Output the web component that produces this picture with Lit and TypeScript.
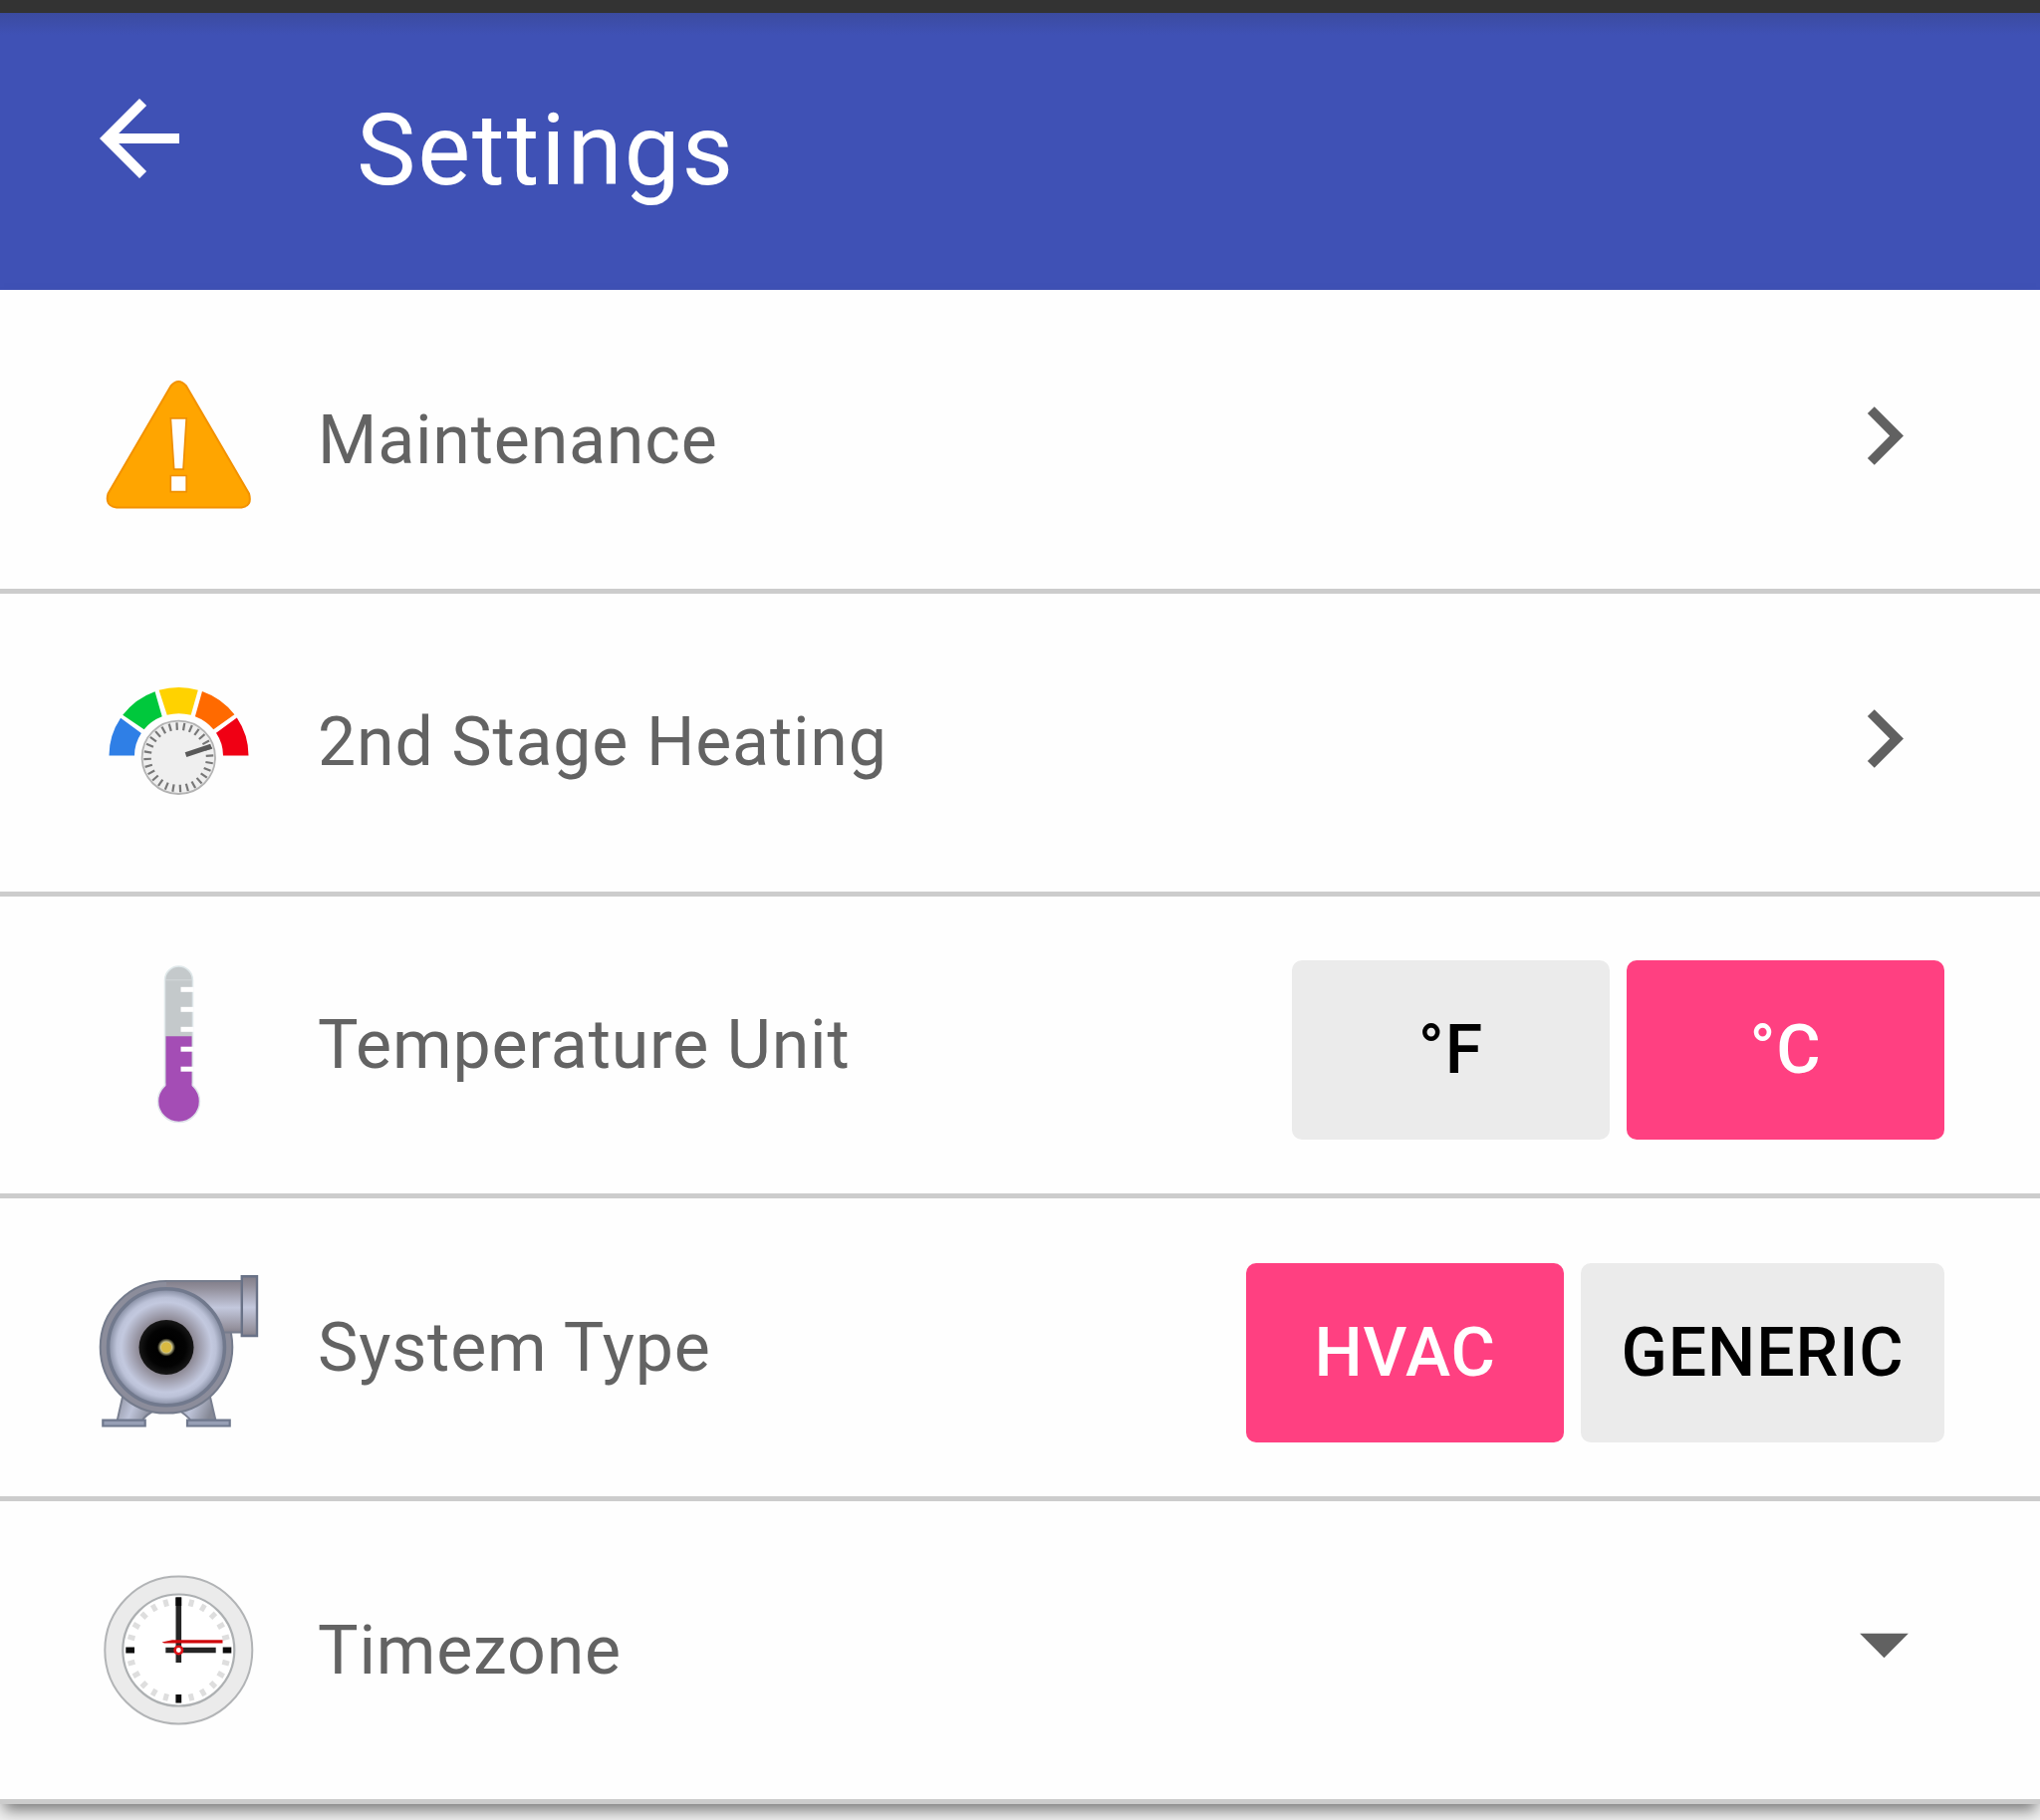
import { LitElement, html, svg, css } from "lit";
import { customElement, property, state } from "lit/decorators.js";
import { styleMap } from "lit/directives/style-map.js";

const rad = (deg: number) => (deg * Math.PI) / 180;
const polar = (cx: number, cy: number, r: number, deg: number, ry = r) =>
  `${(cx + r * Math.cos(rad(deg))).toFixed(2)} ${(cy - ry * Math.sin(rad(deg))).toFixed(2)}`;

// One coloured band of the gauge; the outer and inner edges have their own start and end angles.
const band = (o1: number, o2: number, i1: number, i2: number, fill: string) => {
  const outer = (a: number) => polar(89.5, 88.5, 70, a, 68.5);
  const inner = (a: number) => polar(89.5, 88.5, 44.5, a, 42.3);
  return svg`<path fill=${fill} d=${`M${outer(o1)}A70 68.5 0 0 1 ${outer(o2)}L${inner(i2)}A44.5 42.3 0 0 0 ${inner(i1)}Z`}/>`;
};

const warning = svg`
  <path fill="#ffa500" stroke="#f39200" stroke-width="2" stroke-linejoin="round"
    d="M81.500 27.500Q89.200 18.500 97 27.500L160 135.500Q163.500 148 152.500 149.500H27Q15 148 18.500 135.500Z"/>
  <path fill="#fff" stroke="#ef8f00" stroke-width="1.700" d="M81.300 59.800H97.200L94 111.200H84.700ZM81.300 117.500H97.200V133.700H81.300Z"/>`;

const gauge = svg`
  ${band(180, 146.5, 180, 147.8, "#2f7fe6")}
  ${band(143.5, 110, 141.5, 112.2, "#00c83c")}
  ${band(106.5, 74, 105.4, 74.1, "#ffd200")}
  ${band(70.4, 37, 68.4, 38.5, "#ff6a00")}
  ${band(33.6, 0, 32.6, 0, "#f00014")}
  <circle cx="89.300" cy="90.300" r="36.700" fill="#efefef" stroke="#b4b4b4" stroke-width="1.800"/>
  ${Array.from({ length: 28 }, (_, i) => svg`<path stroke="#777" stroke-width="2.200" d=${`M${polar(89.3, 90.3, 35, i * 12.857 + 3)}L${polar(89.3, 90.3, 27.5, i * 12.857 + 3)}`}/>`)}
  <path stroke="#595959" stroke-width="5" d="M96.500 87.700L122 79.200"/>`;

const thermometer = svg`
  <path fill="#c4c9cb" stroke="#dfe8ea" stroke-width="1.500" d="M75.500 34a14 14 0 0 1 28 0v104h-28z"/>
  <circle cx="89.500" cy="155.500" r="21" fill="#a44db5" stroke="#dfe3ea" stroke-width="1.500"/>
  <path fill="#a44db5" d="M76.500 90.300h26V146h-26z"/>
  <path stroke="#d3d8da" stroke-width="1" d="M76 33.800h27"/>
  ${[43.3, 63.3, 83.3, 103.2, 123.2].map((y) => svg`<path stroke="#fff" stroke-width="5" d=${`M91.500 ${y}h13`}/>`)}`;

const blower = svg`
  <defs>
    <radialGradient id="bowl" gradientUnits="userSpaceOnUse" cx="77" cy="82.500" r="58">
      <stop offset=".45" stop-color="#89848f"/><stop offset=".78" stop-color="#c3c9df"/>
      <stop offset=".86" stop-color="#bcc2d8"/><stop offset="1" stop-color="#858ca1"/>
    </radialGradient>
    <radialGradient id="hub" gradientUnits="userSpaceOnUse" cx="77" cy="82.500" r="27.500">
      <stop offset=".2" stop-color="#cfc88f"/><stop offset=".33" stop-color="#000"/>
      <stop offset=".7" stop-color="#030303"/><stop offset="1" stop-color="#171717"/>
    </radialGradient>
    <linearGradient id="pipe" x1="0" y1="0" x2="0" y2="1">
      <stop offset="0" stop-color="#817d88"/><stop offset=".15" stop-color="#928f9b"/>
      <stop offset=".52" stop-color="#c3c8dd"/><stop offset=".9" stop-color="#96939f"/><stop offset="1" stop-color="#85828d"/>
    </linearGradient>
    <linearGradient id="leg" x1="0" y1="0" x2="1" y2=".3">
      <stop offset="0" stop-color="#8b8e9c"/><stop offset=".5" stop-color="#bec4d9"/><stop offset="1" stop-color="#858895"/>
    </linearGradient>
  </defs>
  <path fill="url(#leg)" stroke="#797f90" stroke-width="2" d="M34 128L27.700 156H53Q55 151 68 144Z"/>
  <path fill="url(#leg)" stroke="#797f90" stroke-width="2" d="M120 128L126.500 156H101.500Q98 151 87 144Z"/>
  <path fill="#979fb5" stroke="#6f788d" stroke-width="2.200" d="M13.300 155.700H55.700V161.500H13.300ZM98 155.700H140.700V161.500H98Z"/>
  <circle cx="77" cy="82.300" r="66.300" fill="#8c8d9b" stroke="#747b8c" stroke-width="2"/>
  <path fill="url(#pipe)" d="M77 15.500H152V67.800H133Q128 48 106 36Q92 28 77 27Z"/>
  <path fill="none" stroke="#777d8d" stroke-width="1.800" d="M77 16H152M134 67.500H152"/>
  <path fill="url(#pipe)" stroke="#697287" stroke-width="2.400" d="M152.800 11.300H168V71H152.800Z"/>
  <circle cx="77" cy="82.300" r="58.500" fill="url(#bowl)" stroke="#71798d" stroke-width="3.500"/>
  <circle cx="77" cy="82.500" r="27.500" fill="url(#hub)"/>
  <circle cx="77" cy="82.500" r="5.200" fill="#d8b941"/>`;

const clock = svg`
  <circle cx="89.300" cy="85.500" r="74" fill="#ebebeb" stroke="#b2b4b6" stroke-width="2"/>
  <circle cx="89.300" cy="85.500" r="56" fill="#fff" stroke="#adb0b2" stroke-width="2.200"/>
  ${Array.from({ length: 24 }, (_, i) => i * 15)
    .filter((a) => a % 90)
    .map((a) => svg`<path stroke="#dedede" stroke-width="5" d=${`M${polar(89.3, 85.5, 52.5, a)}L${polar(89.3, 85.5, 45.5, a)}`}/>`)}
  <path stroke="#252525" stroke-width="5.600" d="M76.300 85.500H126.700M89.300 32.500V98"/>
  <path stroke="#0c0c0c" stroke-width="5.800" d="M36.300 85.500H45M133.700 85.500H142.300M89.300 130V138.500M89.300 32.500V41"/>
  <path fill="#cf080c" d="M72.500 77.600L83 75.200H133.500V78.600H75Z"/>
  <circle cx="89.300" cy="85.500" r="3.700" fill="#fff" stroke="#dc1015" stroke-width="2.600"/>`;

interface Row {
  label: string;
  icon: unknown;
  iconTop: number;
  kind: "link" | "menu" | "toggle";
  options?: string[];
  chosen?: number;
}

@customElement("setting-row")
export class SettingRow extends LitElement {
  @property({ attribute: false }) row!: Row;
  @state() private chosen = -1;

  static styles = css`
    :host { display: flex; align-items: flex-start; box-sizing: border-box; height: 303.800px; border-bottom: 5.500px solid #ccc; padding: 0 96px 0 90px; background: #fefefe; }
    .icon { flex: none; width: 180px; height: 180px; }
    .label { flex: 1; margin: 109.500px 0 0 49px; font-size: 68px; line-height: 80px; letter-spacing: .82px; color: #636363; white-space: nowrap; }
    .chevron, .caret { flex: none; width: 117px; height: 117px; margin: 87px 2px 0 0; fill: #616161; }
    .caret { margin-top: 83.600px; }
    .group { display: flex; gap: 17px; margin-top: 64.300px; }
    .option { box-sizing: border-box; min-width: 319px; height: 180px; border: 0; border-radius: 10px; padding: 0 40.400px; background: #ebebeb; color: #000; font: 500 68px Roboto, sans-serif; letter-spacing: .9px; }
    .on { background: #ff4081; color: #fff; }
  `;

  private trailing() {
    const r = this.row;
    if (r.kind === "toggle") {
      const current = this.chosen < 0 ? r.chosen : this.chosen;
      return html`<div class="group">
        ${r.options!.map((o, i) => html`<button class="option ${i === current ? "on" : ""}" @click=${() => (this.chosen = i)}>${o}</button>`)}
      </div>`;
    }
    return r.kind === "link"
      ? html`<svg class="chevron" viewBox="0 0 24 24"><path d="M8.590 16.590L13.170 12 8.590 7.410 10 6l6 6-6 6z"/></svg>`
      : html`<svg class="caret" viewBox="0 0 24 24"><path d="M7 10l5 5 5-5z"/></svg>`;
  }

  render() {
    return html`<svg class="icon" viewBox="0 0 180 180" style=${styleMap({ marginTop: `${this.row.iconTop}px` })}>${this.row.icon}</svg>
      <span class="label">${this.row.label}</span>${this.trailing()}`;
  }
}

@customElement("app-root")
export class AppRoot extends LitElement {
  private rows: Row[] = [
    { label: "Maintenance", icon: warning, iconTop: 68, kind: "link" },
    { label: "2nd Stage Heating", icon: gauge, iconTop: 74, kind: "link" },
    { label: "Temperature Unit", icon: thermometer, iconTop: 50, kind: "toggle", options: ["°F", "°C"], chosen: 1 },
    { label: "System Type", icon: blower, iconTop: 67, kind: "toggle", options: ["HVAC", "GENERIC"], chosen: 0 },
    { label: "Timezone", icon: clock, iconTop: 63.5, kind: "menu" },
  ];

  static styles = css`
    :host { display: flex; flex-direction: column; height: 1827px; overflow: hidden; background: #f0f0f0; font-family: Roboto, sans-serif; }
    .status { flex: none; height: 12.500px; background: #333; }
    .header { flex: none; display: flex; height: 278.500px; background: linear-gradient(#3b4ba0, #3f51b5 22px); color: #fff; }
    .back { width: 120px; height: 120px; margin: 66.500px 0 0 80px; fill: #fff; }
    .title { margin: 79px 0 0 158px; font-size: 100px; line-height: 117px; font-weight: 400; letter-spacing: 1.850px; }
    .list { flex: none; display: flex; flex-direction: column; padding-top: 1px; background: #fefefe; box-shadow: 0 10px 14px -4px rgba(0, 0, 0, .5); }
  `;

  render() {
    return html`
      <div class="status"></div>
      <header class="header">
        <svg class="back" viewBox="0 0 24 24"><path d="M20 11H7.830l5.590-5.590L12 4l-8 8 8 8 1.410-1.410L7.830 13H20v-2z"/></svg>
        <h1 class="title">Settings</h1>
      </header>
      <main class="list">${this.rows.map((row) => html`<setting-row .row=${row}></setting-row>`)}</main>`;
  }
}
